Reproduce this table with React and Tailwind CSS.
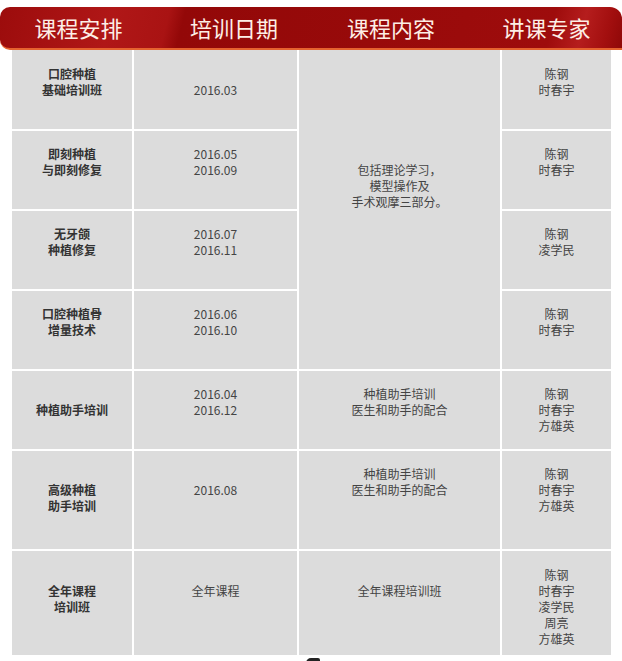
import React from "react";

const F = { fontFamily: '"Noto Sans CJK SC", "Noto Sans", sans-serif' };

function Cell({ lines, bold, extra = "", span = "" }) {
  return (
    <div
      className={`bg-[#dcdcdc] flex flex-col items-center justify-center text-center text-[12px] leading-[16px] ${
        bold ? "font-bold text-[#333]" : "text-[#444]"
      } ${extra} ${span}`}
    >
      {lines.map((l, i) => (
        <div key={i}>{l}</div>
      ))}
    </div>
  );
}

export default function App() {
  return (
    <div className="w-[622px] h-[661px] overflow-hidden bg-white" style={F}>
      <div className="pt-[7px]">
        <div className="h-[43px] rounded-l-[10px] rounded-tr-[12px] border-b-2 border-[#e5622f] bg-[linear-gradient(104deg,#9c0c0c_0%,#b01717_18%,#a91313_27%,#930808_29.5%,#980a0a_60%,#9e0c0c_88%,#b51d1d_93%,#a30f0f_97%,#8f0808_100%)] grid grid-cols-[157px_154px_160px_151px] items-center text-[22px] leading-[41px] text-[#fdeee6]">
          <div className="text-center">课程安排</div>
          <div className="text-center">培训日期</div>
          <div className="text-center">课程内容</div>
          <div className="text-center">讲课专家</div>
        </div>
      </div>
      <div className="ml-[12px] w-[599px] grid grid-cols-[120px_163px_201px_109px] grid-rows-[79px_78px_78px_78px_78px_98px_104px] gap-[2px] bg-white">
        {/* Row 1 */}
        <Cell bold lines={["口腔种植", "基础培训班"]} extra="pb-[16px]" span="col-start-1 row-start-1" />
        <Cell lines={["2016.03"]} span="col-start-2 row-start-1" />
        <Cell
          lines={["包括理论学习，", "模型操作及", "手术观摩三部分。"]}
          extra="pb-[47px]"
          span="col-start-3 row-start-1 row-span-4"
        />
        <Cell lines={["陈钢", "时春宇"]} extra="pb-[16px]" span="col-start-4 row-start-1" />
        {/* Row 2 */}
        <Cell bold lines={["即刻种植", "与即刻修复"]} extra="pb-[16px]" span="col-start-1 row-start-2" />
        <Cell lines={["2016.05", "2016.09"]} extra="pb-[16px]" span="col-start-2 row-start-2" />
        <Cell lines={["陈钢", "时春宇"]} extra="pb-[16px]" span="col-start-4 row-start-2" />
        {/* Row 3 */}
        <Cell bold lines={["无牙颌", "种植修复"]} extra="pb-[16px]" span="col-start-1 row-start-3" />
        <Cell lines={["2016.07", "2016.11"]} extra="pb-[16px]" span="col-start-2 row-start-3" />
        <Cell lines={["陈钢", "凌学民"]} extra="pb-[16px]" span="col-start-4 row-start-3" />
        {/* Row 4 */}
        <Cell bold lines={["口腔种植骨", "增量技术"]} extra="pb-[16px]" span="col-start-1 row-start-4" />
        <Cell lines={["2016.06", "2016.10"]} extra="pb-[16px]" span="col-start-2 row-start-4" />
        <Cell lines={["陈钢", "时春宇"]} extra="pb-[16px]" span="col-start-4 row-start-4" />
        {/* Row 5 */}
        <Cell bold lines={["种植助手培训"]} span="col-start-1 row-start-5" />
        <Cell lines={["2016.04", "2016.12"]} extra="pb-[16px]" span="col-start-2 row-start-5" />
        <Cell lines={["种植助手培训", "医生和助手的配合"]} extra="pb-[16px]" span="col-start-3 row-start-5" />
        <Cell lines={["陈钢", "时春宇", "方雄英"]} span="col-start-4 row-start-5" />
        {/* Row 6 */}
        <Cell bold lines={["高级种植", "助手培训"]} extra="pb-[4px]" span="col-start-1 row-start-6" />
        <Cell lines={["2016.08"]} extra="pb-[20px]" span="col-start-2 row-start-6" />
        <Cell lines={["种植助手培训", "医生和助手的配合"]} extra="pb-[36px]" span="col-start-3 row-start-6" />
        <Cell lines={["陈钢", "时春宇", "方雄英"]} extra="pb-[20px]" span="col-start-4 row-start-6" />
        {/* Row 7 */}
        <Cell bold lines={["全年课程", "培训班"]} extra="pb-[8px]" span="col-start-1 row-start-7" />
        <Cell lines={["全年课程"]} extra="pb-[24px]" span="col-start-2 row-start-7" />
        <Cell lines={["全年课程培训班"]} extra="pb-[24px]" span="col-start-3 row-start-7" />
        <Cell lines={["陈钢", "时春宇", "凌学民", "周亮", "方雄英"]} extra="pt-[8px]" span="col-start-4 row-start-7" />
      </div>
      <div className="mt-[3px] ml-[306px] w-[14px] h-[10px] rounded-tl-[5px] rounded-tr-[2px] bg-[#222]" />
    </div>
  );
}
